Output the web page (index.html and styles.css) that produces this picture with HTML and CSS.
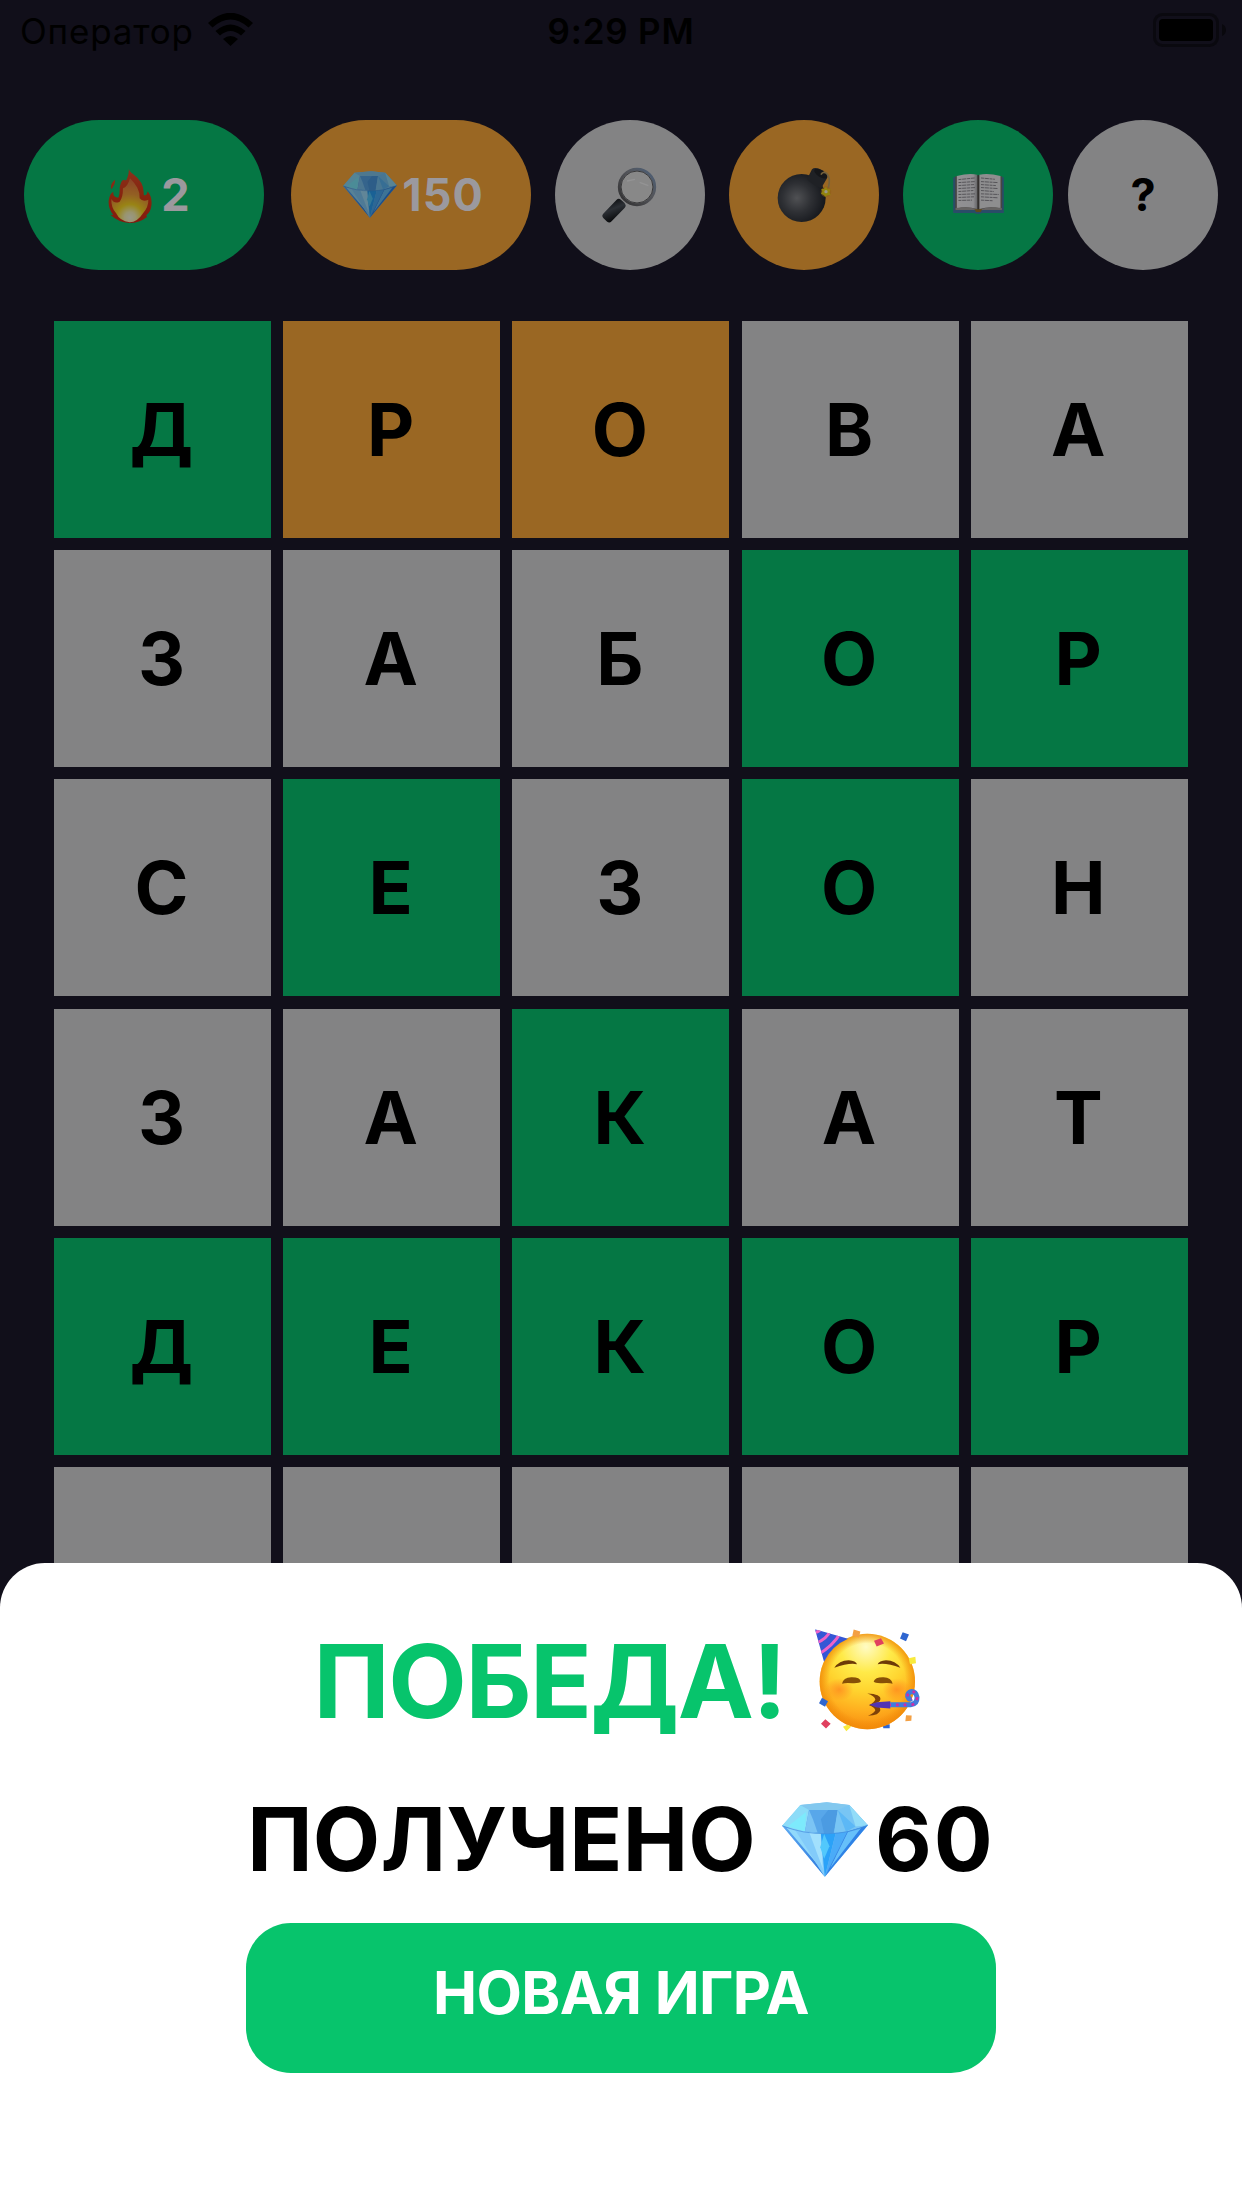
FILE: index.html
```
<!DOCTYPE html>
<html lang="ru">
<head>
<meta charset="utf-8">
<title>Победа</title>
<link rel="stylesheet" href="styles.css">
</head>
<body>
<svg class="defs" aria-hidden="true">
  <defs>
    <linearGradient id="gemTop" x1="0" y1="0" x2="1" y2="1"><stop offset="0" stop-color="#8fd0f5"/><stop offset="1" stop-color="#62b4f3"/></linearGradient>
    <linearGradient id="gemLeft" x1="0" y1="0" x2="1" y2="1"><stop offset="0" stop-color="#5fa9f2"/><stop offset="1" stop-color="#2d78dc"/></linearGradient>
    <symbol id="gem" viewBox="123 98 259 227">
      <path d="M123 170 178 107 258 99 326 107 382 168 252 324Z" fill="url(#gemTop)"/>
      <path d="M123 170 178 107 204 120 192 187Z" fill="#8cdcf8"/>
      <path d="M140 172 195 128 192 187Z" fill="#7deafc"/>
      <path d="M178 107 258 99 326 107 291 122H204Z" fill="#82c8ef"/>
      <path d="M204 122H291L280 192 246 194 192 187Z" fill="#58a7ea"/>
      <path d="M204 122 192 187 230 190 216 150Z" fill="#7bc4f4"/>
      <path d="M240 150 262 122H291L278 192 250 194Z" fill="#4b9be2"/>
      <path d="M291 122 326 107 382 168 316 188 280 192Z" fill="#78c5f4"/>
      <path d="M291 122 345 172 316 188Z" fill="#5cb8f6"/>
      <path d="M326 107 382 168 345 172Z" fill="#92dcf8"/>
      <path d="M123 170 162 183 252 324Z" fill="url(#gemLeft)"/>
      <path d="M136 176 188 188 243 302Z" fill="#91d9fb"/>
      <path d="M162 183 240 193 252 324Z" fill="#82cbfa"/>
      <path d="M205 190 240 193 246 300Z" fill="#a2e0fd"/>
      <path d="M240 195 285 192 252 324Z" fill="#2ba2f8"/>
      <path d="M250 195 266 232 250 270 238 235Z" fill="#52c8fc"/>
      <path d="M285 192 320 187 252 324Z" fill="#4aabf8"/>
      <path d="M320 187 382 168 252 324Z" fill="#2f82e6"/>
      <path d="M322 188 362 176 268 298Z" fill="#66c0fa"/>
      <path d="M123 170Q185 195 258 194T382 168" fill="none" stroke="#3f8bdc" stroke-width="2"/>
    </symbol>
    <linearGradient id="flameOuter" x1="0" y1="0" x2="0" y2="1"><stop offset="0" stop-color="#e4532f"/><stop offset=".55" stop-color="#e03a16"/><stop offset="1" stop-color="#dc2c18"/></linearGradient>
    <radialGradient id="flameInner" gradientUnits="userSpaceOnUse" cx="392" cy="650" r="112"><stop offset="0" stop-color="#fffde0"/><stop offset=".15" stop-color="#fff8b8"/><stop offset=".36" stop-color="#ffdc22"/><stop offset=".62" stop-color="#f5a03a"/><stop offset="1" stop-color="#ea7440"/></radialGradient>
    <radialGradient id="bombBody" cx=".4" cy=".5" r=".6"><stop offset="0" stop-color="#85878c"/><stop offset=".5" stop-color="#4d5057"/><stop offset="1" stop-color="#22262e"/></radialGradient>
    <linearGradient id="rim" x1="0" y1="1" x2="1" y2="0"><stop offset="0" stop-color="#4e4c4d"/><stop offset=".6" stop-color="#8c8f98"/><stop offset="1" stop-color="#7e9fc9"/></linearGradient>
    <linearGradient id="grip" x1="0" y1="0" x2="1" y2="1"><stop offset="0" stop-color="#17191d"/><stop offset=".4" stop-color="#4a5059"/><stop offset="1" stop-color="#08090b"/></linearGradient>
    <linearGradient id="page" x1="0" y1="0" x2="1" y2="0"><stop offset="0" stop-color="#f2f1f5"/><stop offset=".8" stop-color="#ecebf0"/><stop offset="1" stop-color="#a9a8ad"/></linearGradient>
    <radialGradient id="face" gradientUnits="userSpaceOnUse" cx="258" cy="140" r="255"><stop offset="0" stop-color="#fffbc4"/><stop offset=".3" stop-color="#ffea48"/><stop offset=".52" stop-color="#ffd42f"/><stop offset=".75" stop-color="#ffb01f"/><stop offset="1" stop-color="#f6860c"/></radialGradient>
    <radialGradient id="faceEdge"><stop offset=".8" stop-color="#f08a08" stop-opacity="0"/><stop offset="1" stop-color="#f08a08" stop-opacity=".8"/></radialGradient>
    <radialGradient id="blush"><stop offset="0" stop-color="#ff7b1c" stop-opacity=".65"/><stop offset="1" stop-color="#ff7b1c" stop-opacity="0"/></radialGradient>
    <clipPath id="hatShape"><path d="M105 87 204 116Q155 137 132 185Z"/></clipPath>
  </defs>
</svg>

<main class="screen">
  <div class="status">
    <div class="carrier"><span>Оператор</span>
      <svg class="wifi" viewBox="0 0 45 33"><path d="M0 10Q22.500-10.500 45 10L40.500 14.500Q22.500-1.500 4.500 14.500ZM7.500 18Q22.500 5 37.500 18L33 22.500Q22.500 13.500 12 22.500ZM15 26Q22.500 20 30 26L22.500 33Z"/></svg>
    </div>
    <time class="clock">9:29 PM</time>
    <svg class="battery" viewBox="0 0 73 34"><rect x="1.500" y="1.500" width="63" height="31" rx="8" fill="none" stroke="#0a090f" stroke-width="3"/><rect x="6" y="6" width="54" height="22" rx="4"/><path d="M69 11Q73 13 73 17T69 23Z" fill="#09080d"/></svg>
  </div>

  <header class="toolbar">
    <div class="pill green streak">
      <svg class="fire" viewBox="326 498 132 168"><path d="M388 499Q388 511 402 520 436 545 433 581 441 587 445 571 460 590 456 615 454 633 441 643L443 648Q420 666 391 666 357 664 333 641L342 643Q326 622 328 599 331 577 342 572 340 590 357 590 362 580 361 560 365 538 373 536 381 542 384 530 390 515 388 499ZM347 536Q349 548 336 565 331 549 347 536Z" fill="url(#flameOuter)"/><path d="M392 532Q404 544 414 560 422 575 421 592 430 604 447 596 448 618 430 638 414 663 391 664 361 660 350 636 335 620 336 594 345 610 361 602 371 590 371 562 384 560 392 532Z" fill="url(#flameInner)"/></svg>
      <b>2</b>
    </div>
    <div class="pill orange gems"><svg class="gem-small"><use href="#gem"/></svg><b>150</b></div>
    <div class="round gray">
      <svg class="lens" viewBox="187 198 168 168"><path d="M243 301 253 310" stroke="#8f8f94" stroke-width="9"/><rect x="-17" y="-38" width="34" height="76" rx="10" transform="translate(223 329) rotate(44)" fill="url(#grip)"/><circle cx="292" cy="258" r="53" fill="#e2e2e3" stroke="url(#rim)" stroke-width="9"/><circle cx="292" cy="258" r="48" fill="none" stroke="#5d5d60" stroke-width="3"/><path d="M262 240 286 235M300 244 326 254" stroke="#f5f5f6" stroke-width="4"/></svg>
    </div>
    <div class="round orange">
      <svg class="bomb" viewBox="710 199 165 165"><circle cx="784" cy="292" r="72" fill="url(#bombBody)"/><path d="M800 236 815 206Q824 196 846 209 866 222 860 233L843 262Q820 257 800 236Z" fill="#34373d"/><ellipse cx="841" cy="219" rx="22" ry="10" transform="rotate(33 841 219)" fill="#23252a"/><path d="M842 222Q848 211 859 218 872 230 864 262" fill="none" stroke="#c3a365" stroke-width="5"/><circle cx="857" cy="273" r="16" fill="#ef9b23" opacity=".5"/><path d="M857 258 861 266 871 266 867 275 871 283 861 284 855 288 850 283 842 279 846 272 843 265 851 265Z" fill="#f4dc16"/><circle cx="857" cy="273" r="5" fill="#fffce0"/></svg>
    </div>
    <div class="round green">
      <svg class="book" viewBox="219 518 153 124"><path d="M219 531H372V639H306Q294 645 282 639H219Z" fill="#467eae"/><path d="M225 528H367V630H225Z" fill="#77726f"/><path d="M230 527Q267 517 292 523V627Q260 618 230 625Z" fill="url(#page)"/><path d="M362 527Q325 517 298 523V627Q330 618 362 625Z" fill="#edecef"/><path d="M226 624Q270 617 292 629H298Q325 617 366 624V630H226Z" fill="#a9a5a3"/><path d="M295 524V630" stroke="#55504f" stroke-width="5"/><path d="M283 628H307L302 636H288Z" fill="#9d7b2c"/><path d="M235 538 284 533M235 547 284 544M235 556 282 553M235 565 286 562M235 574 280 571M235 583 286 581M235 592 282 590M235 601 276 600M303 533 345 537M303 544 354 547M303 553 348 556M303 562 354 565M303 571 342 574M303 581 357 583M303 590 354 593M303 600 340 602" stroke="#8e8c93" stroke-width="3" stroke-dasharray="9 2 13 2"/></svg>
    </div>
    <div class="round gray help"><b>?</b></div>
  </header>

  <section class="board">
    <div class="cell green">Д</div><div class="cell orange">Р</div><div class="cell orange">О</div><div class="cell">В</div><div class="cell">А</div>
    <div class="cell">З</div><div class="cell">А</div><div class="cell">Б</div><div class="cell green">О</div><div class="cell green">Р</div>
    <div class="cell">С</div><div class="cell green">Е</div><div class="cell">З</div><div class="cell green">О</div><div class="cell">Н</div>
    <div class="cell">З</div><div class="cell">А</div><div class="cell green">К</div><div class="cell">А</div><div class="cell">Т</div>
    <div class="cell green">Д</div><div class="cell green">Е</div><div class="cell green">К</div><div class="cell green">О</div><div class="cell green">Р</div>
    <div class="cell"></div><div class="cell"></div><div class="cell"></div><div class="cell"></div><div class="cell"></div>
  </section>

  <section class="sheet">
    <h1 class="title"><span>ПОБЕДА!</span>
      <svg class="party" viewBox="105 84 315 311">
        <path d="M308 372H329V384H310Z" fill="#2f66d0"/>
        <circle cx="262" cy="244" r="143" fill="url(#face)"/>
        <circle cx="262" cy="244" r="143" fill="url(#faceEdge)"/>
        <ellipse cx="178" cy="268" rx="42" ry="34" fill="url(#blush)"/><ellipse cx="350" cy="268" rx="42" ry="34" fill="url(#blush)"/>
        <g clip-path="url(#hatShape)"><path d="M100 80H210V190H100Z" fill="#3557d5"/><path d="M100 96Q116 98 124 84M106 130Q140 118 152 90M114 164Q160 136 182 98" fill="none" stroke="#ee62c8" stroke-width="9"/></g>
        <path d="M163 203Q177 180 206 180 228 182 231 192 206 187 163 203ZM361 203Q347 180 318 180 297 182 293 192 319 187 361 203Z" fill="#6d3a07"/>
        <path d="M186 251Q190 230 216 231 240 231 243 244 239 250 216 249 196 247 186 251ZM338 251Q334 230 308 231 285 231 281 244 285 250 308 249 328 247 338 251Z" fill="#875006"/>
        <path d="M262 280Q304 282 301 298 300 307 280 310 302 318 301 330 298 345 264 347 285 336 286 330 284 321 267 315 284 306 286 298 284 288 262 280Z" fill="#804208"/>
        <path d="M268 314 290 306 331 303V325L290 322Z" fill="#5234b4"/>
        <path d="M330 314H392Q412 312 411 291 408 274 395 274 382 277 383 289 387 299 396 296" fill="none" stroke="#427bdc" stroke-width="15"/>
        <path d="M330 314H392Q412 312 411 291 408 274 395 274 382 277 383 289 387 299 396 296" fill="none" stroke="#d22ba4" stroke-width="8" stroke-dasharray="8 15" stroke-dashoffset="-18"/>
        <path d="M221 88 241 94 237 112 217 107ZM378 345 395 346 394 362 376 363Z" fill="#f3a044"/>
        <path d="M282 122 303 114 312 130 290 139ZM136 357 152 371 138 385 123 371Z" fill="#e0405f"/>
        <path d="M368 96 387 103 378 123 360 115ZM126 293 144 303 135 320 117 309Z" fill="#2f66d0"/>
        <path d="M386 174 406 170 408 189 390 192ZM189 380 202 374 214 379 199 393Z" fill="#f8ea3d"/>
      </svg>
    </h1>
    <div class="reward"><span class="word">ПОЛУЧЕНО</span><svg class="gem-large"><use href="#gem"/></svg><span class="amount">60</span></div>
    <button class="again">НОВАЯ ИГРА</button>
  </section>
</main>
</body>
</html>
```
FILE: styles.css
```
* { box-sizing: border-box; }
body {
  margin: 0;
  background: #110f1a;
  color: #000;
  font-family: Inter, "Liberation Sans", sans-serif;
}
.defs { position: absolute; width: 0; height: 0; }
svg { display: block; flex: none; }
.screen {
  display: flex;
  flex-direction: column;
  width: 1242px;
  height: 2208px;
  overflow: hidden;
  background: linear-gradient(#110f1a 1800px, #fff 1800px);
}
.status {
  display: grid;
  grid-template-columns: 1fr auto 1fr;
  align-items: center;
  height: 60px;
  padding: 2px 16px 0 20px;
  font-size: 35px;
  letter-spacing: .8px;
  line-height: 58px;
}
.carrier { display: flex; align-items: center; gap: 14px; }
.wifi { width: 45px; height: 33px; margin-top: -3px; }
.clock { margin: 0 2px 0 -2px; font-weight: 600; }
.battery { width: 73px; height: 34px; justify-self: end; margin-top: -2px; }

.toolbar {
  display: flex;
  gap: 24px;
  height: 150px;
  margin: 60px 24px 0;
  font-size: 45px;
  line-height: 60px;
}
.pill, .round {
  display: flex;
  align-items: center;
  justify-content: center;
  height: 150px;
  padding-bottom: 1px;
  border-radius: 75px;
}
.pill { width: 240px; color: #9b999e; }
.round { width: 150px; }
.streak { gap: 9px; padding-left: 10px; margin-right: 3px; }
.gems { gap: 5px; padding-left: 5px; letter-spacing: 1px; }
.help { margin-left: -9px; }
.toolbar svg { filter: brightness(.6); }
.fire { width: 44px; height: 56px; }
.gem-small { width: 54px; height: 47px; }
.lens { width: 56px; height: 56px; }
.bomb { width: 55px; height: 55px; }
.book { width: 51px; height: 41px; margin-top: -2px; }

.board {
  display: grid;
  grid-template-columns: repeat(5, 217px);
  grid-auto-rows: 217px;
  gap: 12.2px;
  flex: none;
  height: 1242px;
  margin: 51px 54px 0;
  overflow: hidden;
}
.cell {
  display: flex;
  align-items: center;
  justify-content: center;
  padding-right: 2px;
  background: #838384;
  font-size: 73px;
  font-weight: 700;
}
.gray { background: #838384; }
.green { background: #057744; }
.orange { background: #9a6723; }

.sheet {
  display: flex;
  flex-direction: column;
  align-items: center;
  flex: none;
  height: 645px;
  padding-top: 68px;
  border-radius: 45px 45px 0 0;
  background: #fff;
}
.title, .reward {
  display: flex;
  align-items: center;
  height: 100px;
  margin: 0;
  line-height: 100px;
  font-weight: 700;
}
.title {
  gap: 29px;
  padding-right: 9px;
  color: #07c46c;
  font-size: 102px;
  letter-spacing: -1.4px;
}
.party { width: 105px; height: 104px; margin-top: -3px; }
.reward { margin-top: 58px; font-size: 87.5px; letter-spacing: .2px; }
.gem-large { width: 86px; height: 75px; margin: 1px 7px 0 26px; }
.amount { letter-spacing: 2px; }
.again {
  width: 750px;
  height: 150px;
  margin-top: 34px;
  padding: 0 0 11px;
  border: 0;
  border-radius: 45px;
  background: #07c46c;
  color: #fff;
  font: 700 59px Inter, "Liberation Sans", sans-serif;
  letter-spacing: -.6px;
}
```
